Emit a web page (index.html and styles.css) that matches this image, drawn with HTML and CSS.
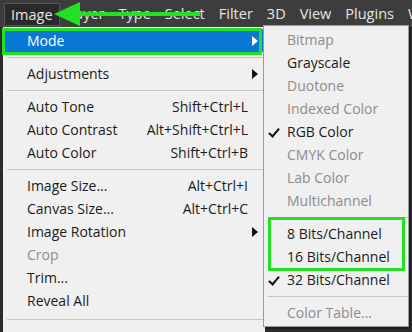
FILE: index.html
```html
<!DOCTYPE html>
<html lang="en">
<head>
    <meta charset="UTF-8">
    <meta name="viewport" content="width=device-width, initial-scale=1.0">
    <title>Image Mode Menu</title>
    <link rel="stylesheet" href="styles.css">
</head>
<body>

    <!-- Menu Bar -->
    <div class="menubar">
        <span class="bar-item active">Image</span>
        <span class="bar-item">Layer</span>
        <span class="bar-item">Type</span>
        <span class="bar-item">Select</span>
        <span class="bar-item">Filter</span>
        <span class="bar-item">3D</span>
        <span class="bar-item">View</span>
        <span class="bar-item">Plugins</span>
        <span class="bar-item">Window</span>
    </div>

    <!-- Image Menu -->
    <div class="menu main-menu">
        <div class="row selected"><span class="label">Mode</span><span class="arrow white"></span></div>
        <div class="sep"></div>
        <div class="row"><span class="label">Adjustments</span><span class="arrow"></span></div>
        <div class="sep"></div>
        <div class="row"><span class="label">Auto Tone</span><span class="key">Shift+Ctrl+L</span></div>
        <div class="row"><span class="label">Auto Contrast</span><span class="key">Alt+Shift+Ctrl+L</span></div>
        <div class="row"><span class="label">Auto Color</span><span class="key">Shift+Ctrl+B</span></div>
        <div class="sep"></div>
        <div class="row"><span class="label">Image Size...</span><span class="key">Alt+Ctrl+I</span></div>
        <div class="row"><span class="label">Canvas Size...</span><span class="key">Alt+Ctrl+C</span></div>
        <div class="row"><span class="label">Image Rotation</span><span class="arrow"></span></div>
        <div class="row disabled"><span class="label">Crop</span></div>
        <div class="row"><span class="label">Trim...</span></div>
        <div class="row"><span class="label">Reveal All</span></div>
        <div class="sep tall"></div>
        <div class="row"><span class="label">Duplicate...</span></div>
    </div>

    <!-- Mode Submenu -->
    <div class="menu sub-menu">
        <div class="row disabled"><span class="label">Bitmap</span></div>
        <div class="row"><span class="label">Grayscale</span></div>
        <div class="row disabled"><span class="label">Duotone</span></div>
        <div class="row disabled"><span class="label">Indexed Color</span></div>
        <div class="row checked"><span class="label">RGB Color</span></div>
        <div class="row disabled"><span class="label">CMYK Color</span></div>
        <div class="row disabled"><span class="label">Lab Color</span></div>
        <div class="row disabled"><span class="label">Multichannel</span></div>
        <div class="sep"></div>
        <div class="row"><span class="label">8 Bits/Channel</span></div>
        <div class="row"><span class="label">16 Bits/Channel</span></div>
        <div class="row checked"><span class="label">32 Bits/Channel</span></div>
        <div class="sep"></div>
        <div class="row disabled"><span class="label">Color Table...</span></div>
    </div>

    <!-- Annotations -->
    <div class="mark mark-mode"></div>
    <div class="mark mark-bits"></div>
    <svg class="pointer" width="150" height="28" viewBox="0 0 150 28">
        <rect x="20" y="12" width="126" height="4" fill="#22e022"/>
        <polygon points="0,14 26,2 26,26" fill="#22e022"/>
    </svg>

</body>
</html>
```

FILE: styles.css
```css
/* Global Styles */
* {
    margin: 0;
    padding: 0;
    box-sizing: border-box;
}

body {
    background-color: #2b2b2b;
    font-family: "Open Sans", "Noto Sans", sans-serif;
    width: 412px;
    height: 332px;
    overflow: hidden;
    position: relative;
}

/* Menu Bar */
.menubar {
    height: 27px;
    background: #3d3d3d;
    display: flex;
    align-items: center;
    padding-left: 4px;
    color: #e6e6e6;
    font-size: 14.5px;
    white-space: nowrap;
    overflow: hidden;
}

.bar-item {
    padding: 0 5px;
    margin-right: 4px;
    line-height: 21px;
}

.bar-item.active {
    background: #2a2a2a;
    border: 1px solid #555;
    padding: 0 6px;
    margin-top: 2px;
    margin-right: 3px;
}

/* Menus */
.menu {
    position: absolute;
    background: #f0f0f0;
    font-size: 14px;
    color: #1b1b1b;
    display: flex;
    flex-direction: column;
    overflow: hidden;
}

.main-menu {
    left: 3px;
    top: 27px;
    width: 262px;
    padding: 2px 0;
    height: 305px;
}

.sub-menu {
    left: 263px;
    top: 25px;
    width: 146px;
    height: 302px;
    padding: 2px 0;
    border: 1px solid #9a9a9a;
    box-shadow: 2px 2px 0 #1e1e1e;
}

.row {
    height: 23px;
    flex: none;
    display: flex;
    align-items: center;
    padding: 0 17px 0 24px;
    position: relative;
    white-space: nowrap;
}

.sub-menu .row {
    padding-left: 23px;
}

.row .label {
    flex: 1;
}

.row.selected {
    background: #0a78d7;
    color: #fff;
}

.row.disabled {
    color: #8c8c8c;
}

.row.checked::before {
    content: "";
    position: absolute;
    left: 7px;
    top: 6px;
    width: 4px;
    height: 9px;
    border-right: 2px solid #111;
    border-bottom: 2px solid #111;
    transform: rotate(40deg);
}

.arrow {
    width: 0;
    height: 0;
    border-top: 5px solid transparent;
    border-bottom: 5px solid transparent;
    border-left: 6px solid #111;
    margin-right: -10px;
}

.arrow.white {
    border-left-color: #fff;
}

.sep {
    height: 10px;
    flex: none;
    display: flex;
    align-items: center;
    padding-left: 4px;
}

.sep.tall {
    height: 14px;
}

.sep::after {
    content: "";
    flex: 1;
    height: 1px;
    background: #c4c4c4;
}

/* Green Annotations */
.mark {
    position: absolute;
    border: 3px solid #22e022;
}

.mark-mode {
    left: 2px;
    top: 28px;
    width: 260px;
    height: 27px;
}

.mark-bits {
    left: 268px;
    top: 217px;
    width: 137px;
    height: 54px;
}

.pointer {
    position: absolute;
    left: 54px;
    top: 0;
}
```
